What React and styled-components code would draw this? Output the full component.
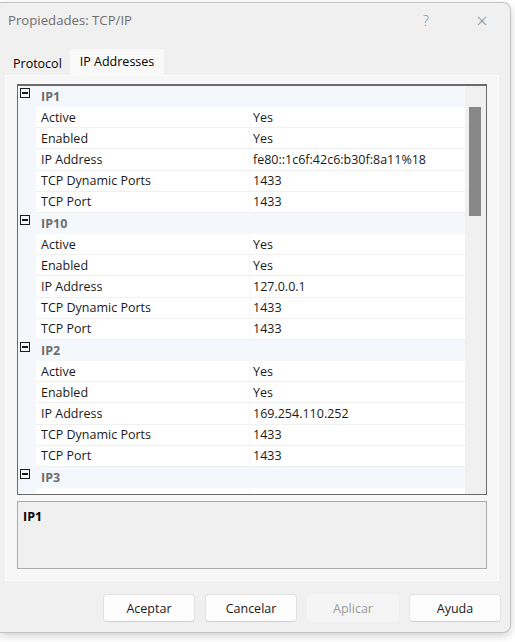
import React from 'react';
import styled, { createGlobalStyle } from 'styled-components';

const GlobalStyle = createGlobalStyle`
  html, body {
    margin: 0;
    padding: 0;
    background: #ffffff;
  }
  body {
    font-family: "Open Sans", "Noto Sans", sans-serif;
    width: 515px;
    height: 642px;
    overflow: hidden;
  }
`;

const Window = styled.div`
  box-sizing: border-box;
  margin-top: 2px;
  width: 511px;
  height: 631px;
  background: #f0f0f0;
  border: 1px solid #c4c4c4;
  border-left: none;
  border-radius: 0 8px 8px 0;
  box-shadow: 0 3px 8px rgba(0, 0, 0, 0.18);
  display: flex;
  flex-direction: column;
`;

const TitleBar = styled.div`
  height: 34px;
  display: flex;
  align-items: center;
  padding-left: 8px;
  color: #6e6e6e;
  font-size: 13.2px;
`;

const Title = styled.div`
  flex: 1;
`;

const TitleButton = styled.div`
  width: 56px;
  text-align: center;
  color: #8a8a8a;
  font-size: ${p => p.$size || 15}px;
  font-weight: 300;
`;

const Tabs = styled.div`
  display: flex;
  align-items: flex-end;
  height: 32px;
  padding-left: 5px;
  margin-top: 6px;
`;

const Tab = styled.div`
  box-sizing: border-box;
  height: ${p => (p.$active ? 26 : 21)}px;
  padding: 0 ${p => (p.$active ? 10 : 8)}px;
  padding-bottom: 2px;
  font-size: 12.5px;
  color: #000;
  display: flex;
  align-items: center;
  background: ${p => (p.$active ? '#f9f9f9' : '#f0f0f0')};
`;

const Panel = styled.div`
  box-sizing: border-box;
  margin-left: 5px;
  width: 494px;
  height: 506px;
  background: #f7f7f7;
  border: 1px solid #fbfbfb;
  border-right-color: #ffffff;
  padding: 8px 0 0 11px;
`;

const Grid = styled.div`
  box-sizing: border-box;
  width: 470px;
  height: 411px;
  border: 1px solid #6a6a6a;
  border-top-width: 2px;
  display: flex;
  overflow: hidden;
`;

const List = styled.div`
  width: 447px;
  overflow: hidden;
  background: #f0f0f0;
`;

const CategoryRow = styled.div`
  box-sizing: border-box;
  height: 21.17px;
  display: flex;
  align-items: center;
  background: #f4f7fc;
`;

const Expander = styled.div`
  width: 18px;
  height: 100%;
  position: relative;
  flex-shrink: 0;
  &::before {
    content: '';
    position: absolute;
    left: 2px;
    top: 2px;
    width: 8px;
    height: 8px;
    border: 1px solid #1a1a1a;
  }
  &::after {
    content: '';
    position: absolute;
    left: 4px;
    top: 6px;
    width: 6px;
    height: 2px;
    background: #1a1a1a;
  }
`;

const CategoryName = styled.div`
  padding-left: 5px;
  font-size: 12.5px;
  font-weight: 700;
  color: #6d6d6d;
`;

const PropRow = styled.div`
  box-sizing: border-box;
  height: 21.17px;
  display: flex;
  background: #f4f7fc;
`;

const Margin = styled.div`
  width: 18px;
  flex-shrink: 0;
`;

const Cell = styled.div`
  box-sizing: border-box;
  height: 100%;
  background: #ffffff;
  border-bottom: 1px solid #f0f0f0;
  display: flex;
  align-items: center;
  font-size: 12.5px;
  color: #1a1a1a;
  white-space: nowrap;
  overflow: hidden;
  width: ${p => p.$w}px;
  padding-left: ${p => p.$pad}px;
  margin-right: ${p => p.$gap || 0}px;
`;

const Scrollbar = styled.div`
  flex: 1;
  background: #f0f0f0;
  padding: 21px 0 0 4px;
`;

const Thumb = styled.div`
  width: 12px;
  height: 109px;
  background: #888888;
`;

const Description = styled.div`
  box-sizing: border-box;
  margin-top: 6px;
  width: 470px;
  height: 68px;
  border: 1px solid #ababab;
  background: #f0f0f0;
  padding: 6px 5px;
  font-size: 12.5px;
  font-weight: 700;
  color: #000;
`;

const ButtonBar = styled.div`
  display: flex;
  justify-content: flex-end;
  gap: 10px;
  padding: 13px 9px 0 0;
`;

const Button = styled.button`
  box-sizing: border-box;
  width: 92px;
  height: 28px;
  border-radius: 4px;
  border: 1px solid ${p => (p.disabled ? '#f5f5f5' : '#e2e2e2')};
  border-bottom-color: ${p => (p.disabled ? '#f5f5f5' : '#cfcfcf')};
  background: ${p => (p.disabled ? '#f5f5f5' : '#fdfdfd')};
  color: ${p => (p.disabled ? '#9d9d9d' : '#1a1a1a')};
  font-family: "Open Sans", "Noto Sans", sans-serif;
  font-size: 12.5px;
  padding: 0;
`;

const groups = [
  { name: 'IP1', address: 'fe80::1c6f:42c6:b30f:8a11%18' },
  { name: 'IP10', address: '127.0.0.1' },
  { name: 'IP2', address: '169.254.110.252' },
];

const props = address => [
  ['Active', 'Yes'],
  ['Enabled', 'Yes'],
  ['IP Address', address],
  ['TCP Dynamic Ports', '1433'],
  ['TCP Port', '1433'],
];

const Row = ({ name, value }) => (
  <PropRow>
    <Margin />
    <Cell $w={213} $pad={5} $gap={1}>{name}</Cell>
    <Cell $w={215} $pad={3}>{value}</Cell>
  </PropRow>
);

const Category = ({ name }) => (
  <CategoryRow>
    <Expander />
    <CategoryName>{name}</CategoryName>
  </CategoryRow>
);

export default function App() {
  return (
    <>
      <GlobalStyle />
      <Window>
        <TitleBar>
          <Title>Propiedades: TCP/IP</Title>
          <TitleButton $size={14}>?</TitleButton>
          <TitleButton $size={20}>×</TitleButton>
        </TitleBar>
        <Tabs>
          <Tab>Protocol</Tab>
          <Tab $active>IP Addresses</Tab>
        </Tabs>
        <Panel>
          <Grid>
            <List>
              {groups.map(g => (
                <React.Fragment key={g.name}>
                  <Category name={g.name} />
                  {props(g.address).map(([n, v]) => (
                    <Row key={n} name={n} value={v} />
                  ))}
                </React.Fragment>
              ))}
              <Category name="IP3" />
              <Row name="" value="" />
            </List>
            <Scrollbar>
              <Thumb />
            </Scrollbar>
          </Grid>
          <Description>IP1</Description>
        </Panel>
        <ButtonBar>
          <Button>Aceptar</Button>
          <Button>Cancelar</Button>
          <Button disabled>Aplicar</Button>
          <Button>Ayuda</Button>
        </ButtonBar>
      </Window>
    </>
  );
}
